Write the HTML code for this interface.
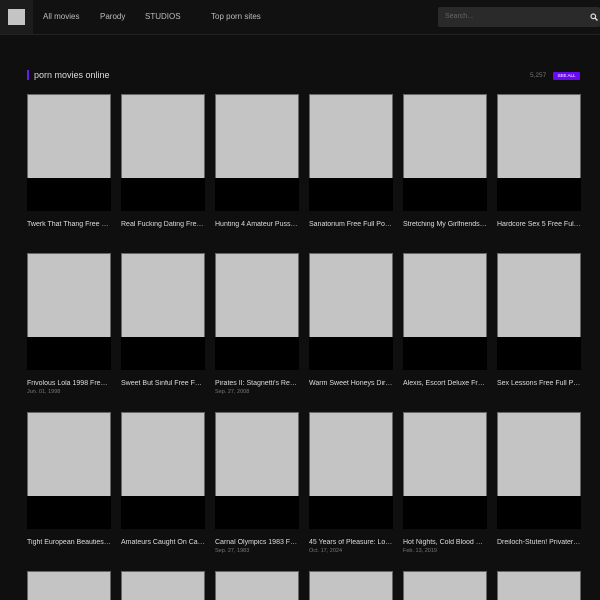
<!DOCTYPE html>
<html style="width:600px;height:600px;overflow:hidden"><head><style>
*{margin:0;padding:0;box-sizing:border-box}
body{width:600px;height:600px;overflow:hidden;background:#0f0f0f;font-family:"Liberation Sans",sans-serif;position:relative}
.hdr{position:absolute;left:0;top:0;width:600px;height:35px;background:#111;border-bottom:1px solid #222}
.logo{position:absolute;left:0;top:0;width:33px;height:34px;background:#1c1c1c}
.logo i{position:absolute;left:8px;top:9px;width:17px;height:16px;background:#c4c4c4}
.nav{position:absolute;top:12px;font-size:8px;color:#bbb}
.search{position:absolute;left:438px;top:7px;width:162px;height:20px;background:#2a2a2a;border-radius:2px;font-size:7px;color:#666;padding:6px 7px}
.ttl{position:absolute;left:27px;top:70px;font-size:9px;color:#ddd;border-left:2px solid #6a1cf0;padding-left:5px;height:10px;line-height:10px}
.cnt{position:absolute;left:530px;top:72px;font-size:6.5px;color:#777}
.see{position:absolute;left:553px;top:72px;width:27px;height:8px;background:#6a0af5;color:#fff;font-size:4.5px;line-height:8px;text-align:center;border-radius:1px}
.c{position:absolute;width:84px}
.c .im{height:84px;background:#c4c4c4;border:1px solid #666;border-bottom:none}
.c .bk{height:33px;background:#000}
.c .t{margin-top:10px;font-size:7px;color:#ddd;white-space:nowrap;overflow:hidden;text-overflow:ellipsis}
.c .d{margin-top:2px;font-size:5.5px;color:#777}
</style></head><body>
<div class="hdr"><div class="logo"><i></i></div>
<span class="nav" style="left:43px">All movies</span>
<span class="nav" style="left:100px">Parody</span>
<span class="nav" style="left:145px">STUDIOS</span>
<span class="nav" style="left:211px">Top porn sites</span>
<div class="search">Search...<svg style="position:absolute;right:2px;top:6px" width="8" height="8" viewBox="0 0 8 8"><circle cx="3.3" cy="3.3" r="2.3" fill="none" stroke="#ddd" stroke-width="1.2"/><line x1="5" y1="5" x2="7.5" y2="7.5" stroke="#ddd" stroke-width="1.4"/></svg></div></div>
<div class="ttl">porn movies online</div>
<div class="cnt">5,257</div><div class="see">SEE ALL</div>

<div class="c" style="left:27px;top:94px"><div class="im"></div><div class="bk"></div><div class="t">Twerk That Thang Free Full Porn</div></div>
<div class="c" style="left:121px;top:94px"><div class="im"></div><div class="bk"></div><div class="t">Real Fucking Dating Free Full</div></div>
<div class="c" style="left:215px;top:94px"><div class="im"></div><div class="bk"></div><div class="t">Hunting 4 Amateur Pussy Free</div></div>
<div class="c" style="left:309px;top:94px"><div class="im"></div><div class="bk"></div><div class="t">Sanatorium Free Full Porn Movie</div></div>
<div class="c" style="left:403px;top:94px"><div class="im"></div><div class="bk"></div><div class="t">Stretching My Girlfriends Free</div></div>
<div class="c" style="left:497px;top:94px"><div class="im"></div><div class="bk"></div><div class="t">Hardcore Sex 5 Free Full Porn</div></div>

<div class="c" style="left:27px;top:253px"><div class="im"></div><div class="bk"></div><div class="t">Frivolous Lola 1998 Free Full</div><div class="d">Jun. 01, 1998</div></div>
<div class="c" style="left:121px;top:253px"><div class="im"></div><div class="bk"></div><div class="t">Sweet But Sinful Free Full Porn</div></div>
<div class="c" style="left:215px;top:253px"><div class="im"></div><div class="bk"></div><div class="t">Pirates II: Stagnetti's Revenge</div><div class="d">Sep. 27, 2008</div></div>
<div class="c" style="left:309px;top:253px"><div class="im"></div><div class="bk"></div><div class="t">Warm Sweet Honeys Directors</div></div>
<div class="c" style="left:403px;top:253px"><div class="im"></div><div class="bk"></div><div class="t">Alexis, Escort Deluxe Free Full</div></div>
<div class="c" style="left:497px;top:253px"><div class="im"></div><div class="bk"></div><div class="t">Sex Lessons Free Full Porn Movie</div></div>

<div class="c" style="left:27px;top:412px"><div class="im"></div><div class="bk"></div><div class="t">Tight European Beauties Free</div></div>
<div class="c" style="left:121px;top:412px"><div class="im"></div><div class="bk"></div><div class="t">Amateurs Caught On Camera Free</div></div>
<div class="c" style="left:215px;top:412px"><div class="im"></div><div class="bk"></div><div class="t">Carnal Olympics 1983 Free Full</div><div class="d">Sep. 27, 1983</div></div>
<div class="c" style="left:309px;top:412px"><div class="im"></div><div class="bk"></div><div class="t">45 Years of Pleasure: Louis Free</div><div class="d">Oct. 17, 2024</div></div>
<div class="c" style="left:403px;top:412px"><div class="im"></div><div class="bk"></div><div class="t">Hot Nights, Cold Blood Free Full</div><div class="d">Feb. 13, 2019</div></div>
<div class="c" style="left:497px;top:412px"><div class="im"></div><div class="bk"></div><div class="t">Dreiloch-Stuten! Privater Free</div></div>

<div class="c" style="left:27px;top:571px;height:29px;overflow:hidden"><div class="im"></div></div>
<div class="c" style="left:121px;top:571px;height:29px;overflow:hidden"><div class="im"></div></div>
<div class="c" style="left:215px;top:571px;height:29px;overflow:hidden"><div class="im"></div></div>
<div class="c" style="left:309px;top:571px;height:29px;overflow:hidden"><div class="im"></div></div>
<div class="c" style="left:403px;top:571px;height:29px;overflow:hidden"><div class="im"></div></div>
<div class="c" style="left:497px;top:571px;height:29px;overflow:hidden"><div class="im"></div></div>
</body></html>
